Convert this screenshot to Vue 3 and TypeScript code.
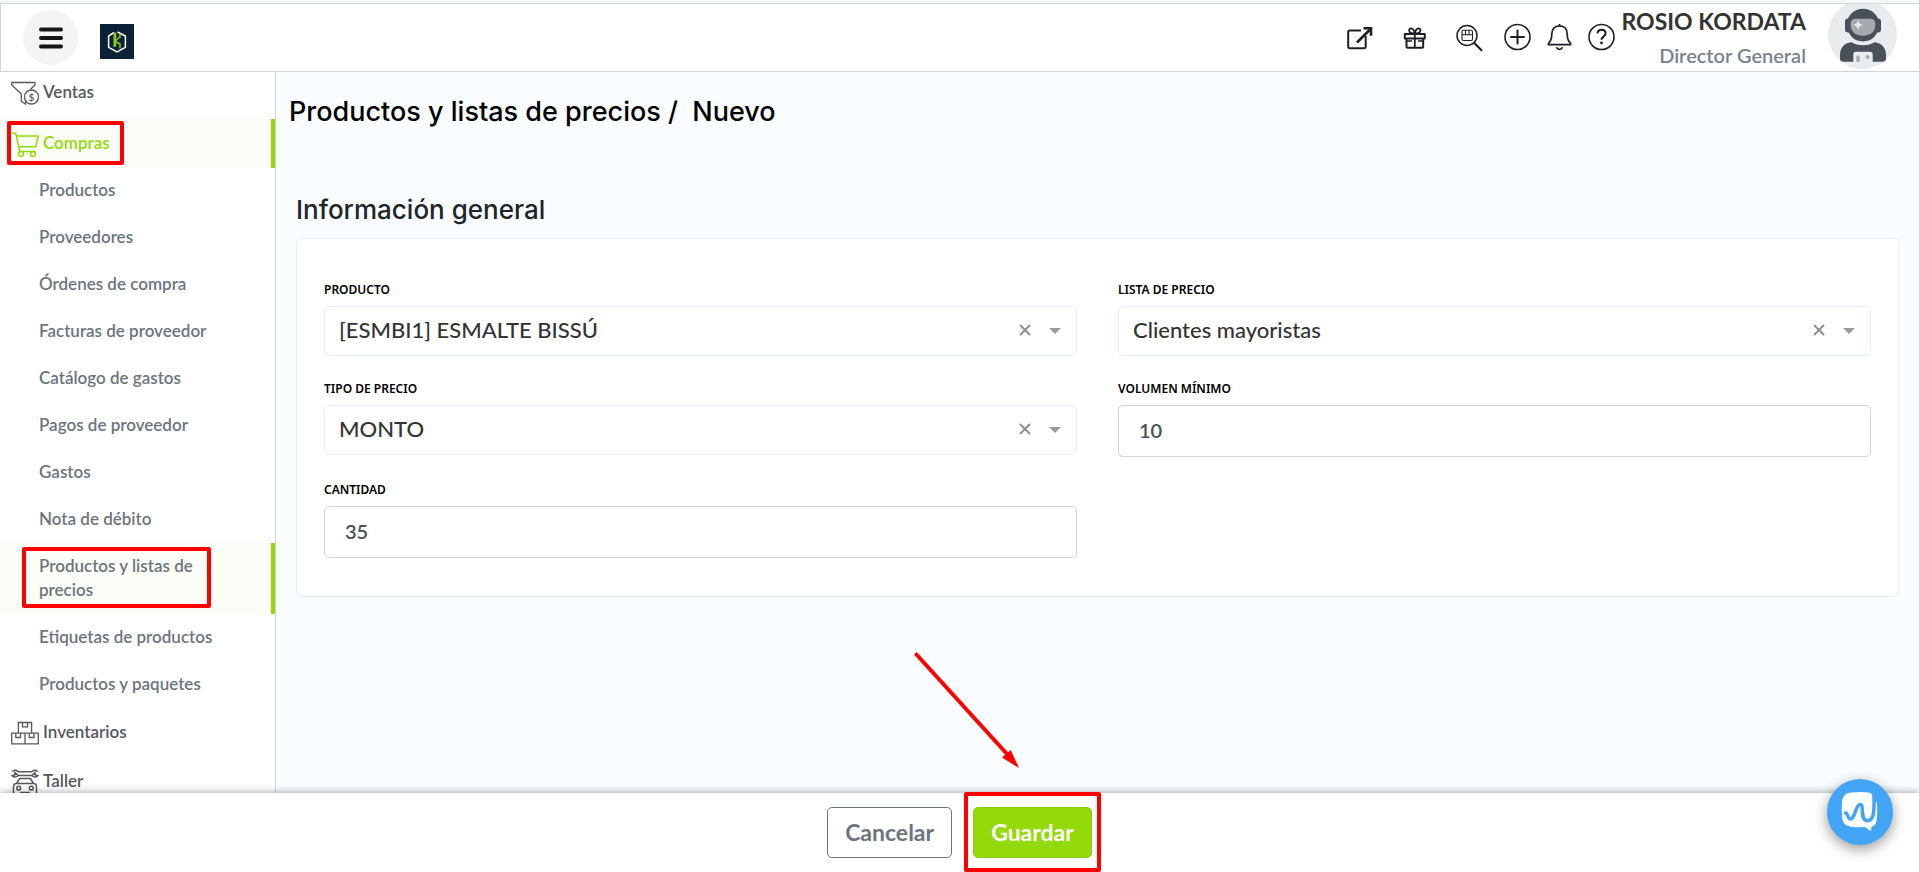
<script setup lang="ts">
import { ref } from 'vue'

const purchaseLinks: string[] = [
  'Productos',
  'Proveedores',
  'Órdenes de compra',
  'Facturas de proveedor',
  'Catálogo de gastos',
  'Pagos de proveedor',
  'Gastos',
  'Nota de débito',
  'Productos y listas de precios',
  'Etiquetas de productos',
  'Productos y paquetes',
]
const activeLink = 'Productos y listas de precios'

const product = ref('[ESMBI1] ESMALTE BISSÚ')
const priceList = ref('Clientes mayoristas')
const priceType = ref('MONTO')
const minVolume = ref('10')
const quantity = ref('35')
</script>

<template>
  <div class="shell">
    <header class="topbar">
      <button class="menu-btn" type="button" aria-label="Menú">
        <svg width="24" height="22" viewBox="0 0 24 22">
          <path d="M2 2.500h20M2 11h20M2 19.500h20" stroke="#161616" stroke-width="4" stroke-linecap="round" />
        </svg>
      </button>
      <a class="logo" href="#" aria-label="Kordata">
        <svg width="34" height="35" viewBox="0 0 34 35" fill="none">
          <path d="M14 8.500 8.600 12v11.400l8.400 4.400 8.400-4.400V12L17.500 8" stroke="#fff" stroke-width="1.500" />
          <path d="M14.200 9v14M15.500 8.500v14M15 17.500l4.500-4.500M20 9.500V14M15.500 17.500l4.500 2.500v4.500" stroke="#8cc71a" stroke-width="1.500" />
        </svg>
      </a>

      <div class="tools">
        <div class="tool-group wide">
          <button type="button" aria-label="Abrir en otra ventana">
            <svg viewBox="0 0 27 27" fill="none" stroke="#1c2026" stroke-width="2">
              <path d="M15 6.500H3.700A1.500 1.500 0 0 0 2.200 8v14.700a1.500 1.500 0 0 0 1.500 1.500h14.500a1.500 1.500 0 0 0 1.500-1.500V12" />
              <path d="M11 18.500 23.500 6M17.500 4.200H25v7.500" stroke-width="2.600" />
            </svg>
          </button>
          <button type="button" aria-label="Novedades">
            <svg viewBox="0 0 27 27" fill="none" stroke="#1c2026" stroke-width="2" stroke-linejoin="round">
              <path d="M3.800 10h20v4.500h-20zM5.500 14.500h16.700v8.200a1 1 0 0 1-1 1H6.500a1 1 0 0 1-1-1z" />
              <path d="M13.800 9.500v14M13.800 9.500C12.500 3 8 3.500 8.200 6.500c0 2 2 3 5.600 3zM13.800 9.500c1.300-6.500 5.800-6 5.600-3 0 2-2 3-5.600 3z" stroke-width="1.800" />
              <path d="M6 17h5M17 17h5" stroke-width="1.500" />
            </svg>
          </button>
          <button type="button" aria-label="Buscar producto">
            <svg viewBox="0 0 27 27" fill="none" stroke="#1c2026" stroke-width="1.500">
              <circle cx="11" cy="11.500" r="10" />
              <path d="m18 18.700 8 8" stroke-width="2.200" />
              <rect x="6" y="6.300" width="10.500" height="10.200" rx="1.500" stroke-width="1.100" />
              <path d="M6 10.700h10.500M9.500 6.500v4M13 6.500v4" stroke-width="1.100" />
            </svg>
          </button>
        </div>
        <div class="tool-group">
          <button type="button" aria-label="Agregar">
            <svg viewBox="0 0 27 27" fill="none" stroke="#1c2026" stroke-width="1.600">
              <circle cx="13.500" cy="13" r="12.500" />
              <path d="M13.500 6.500v13M7 13h13" stroke-width="2" stroke-linecap="round" />
            </svg>
          </button>
          <button type="button" aria-label="Notificaciones">
            <svg viewBox="0 0 27 27" fill="none" stroke="#1c2026" stroke-width="1.700" stroke-linejoin="round">
              <path d="M13.500 1.800c-5 0-7.700 3.600-7.700 8.200 0 5-1.300 7.500-3.400 9.300v1.400h22.200v-1.400c-2.100-1.800-3.400-4.300-3.400-9.300 0-4.600-2.700-8.200-7.700-8.200z" />
              <path d="M13.500 0v2" />
              <path d="M10.500 23.200a3.200 3.200 0 0 0 6 0" />
            </svg>
          </button>
          <button type="button" aria-label="Ayuda">
            <svg viewBox="0 0 27 27" fill="none" stroke="#1c2026" stroke-width="1.600">
              <circle cx="13.500" cy="13" r="12.500" />
              <path d="M9.500 9.500c.2-2.400 1.800-3.700 4.100-3.700 2.400 0 4 1.400 4 3.500 0 3-4 3.200-4 6.500" stroke-width="2" />
              <circle cx="13.500" cy="19" r="1.400" fill="#1c2026" stroke="none" />
            </svg>
          </button>
        </div>
      </div>

      <div class="user">
        <span class="user-name">ROSIO KORDATA</span>
        <span class="user-role">Director General</span>
      </div>
      <svg class="avatar" width="69" height="69" viewBox="0 0 69 69">
        <circle cx="34.500" cy="34.500" r="34.500" fill="#e8ecef" />
        <rect x="17" y="18.500" width="36" height="14" rx="3" fill="#4a505a" />
        <path d="M35 8.800c9 0 16 6.500 16 15.500 0 10-6.500 17.200-16 17.200s-16-7.200-16-17.200c0-9 7-15.500 16-15.500z" fill="#4a505a" />
        <path d="M28 18.800h14c4 0 5.300 2.200 5.300 5.500 0 7-3.800 11.400-12.300 11.400S22.700 31.300 22.700 24.300c0-3.300 1.300-5.500 5.300-5.500z" fill="#a6aaae" />
        <path d="M30 19.500c.5 3.800 1.700 5 5.500 5.500-3.800.5-5 1.700-5.500 5.500-.5-3.800-1.700-5-5.500-5.500 3.800-.5 5-1.700 5.500-5.500z" fill="#e8ecef" />
        <path d="M23.500 42.200c3 2 7 3 11.500 3s8.500-1 11.500-3C54 43 58 48 58 55v3.500c0 2.200-1.300 3.300-3.500 3.300h-39c-2.200 0-3.500-1.100-3.500-3.300V55c0-7 4-12 11.500-12.800z" fill="#4a505a" />
        <path d="M25.300 62v-7.500c0-2 1-2.800 2.800-2.800h13.800c1.800 0 2.800.8 2.800 2.800V62z" fill="#e8ecef" />
        <rect x="28.300" y="55.500" width="3.400" height="6.500" rx="1.500" fill="#a6aaae" />
        <circle cx="39.700" cy="57" r="1.900" fill="#a6aaae" />
      </svg>
    </header>

    <div class="body">
      <nav class="sidebar">
        <a class="section" href="#">
          <svg viewBox="0 0 28 26" fill="none" stroke="#55585c" stroke-width="1.300">
            <path d="M24 5V2.500H.8V5l9.500 9v7.500l4.200 2.500v-3M24 5l-4.500 4.300" />
            <circle cx="20.500" cy="17" r="7" />
            <text x="20.500" y="21" text-anchor="middle" class="coin">$</text>
          </svg>
          <span>Ventas</span>
        </a>
        <a class="section current" href="#">
          <svg viewBox="0 0 28 26" fill="none" stroke="#94d90a" stroke-width="1.500">
            <path d="M.5 2.200h4.200l4 18.300h15.800M5.500 5h21.700l-2.500 10.700H7.800" />
            <circle cx="10" cy="23" r="2.400" />
            <circle cx="22" cy="23" r="2.400" />
          </svg>
          <span>Compras</span>
          <i class="mark mark-section"></i>
        </a>
        <ul class="sublist">
          <li v-for="link in purchaseLinks" :key="link">
            <a href="#" :class="{ active: link === activeLink }">
              {{ link }}
              <i v-if="link === activeLink" class="mark mark-link"></i>
            </a>
          </li>
        </ul>
        <a class="section" href="#">
          <svg viewBox="0 0 28 26" fill="none" stroke="#55585c" stroke-width="1.300">
            <path d="M7.400 2.500h13.200v10.700H7.400zM.7 13.200H14v10.600H.7zM14 13.200h13.300v10.600H14z" />
            <path d="M11.500 2.500v4.300h5V2.500M4.800 13.200v4.300h4.700v-4.300M18.300 13.200v4.300H23v-4.300" />
          </svg>
          <span>Inventarios</span>
        </a>
        <a class="section" href="#">
          <svg viewBox="0 0 28 26" fill="none" stroke="#55585c" stroke-width="1.500">
            <path d="M7 2.800h14M7 6.500h14" />
            <path d="M1.200 2.600C3 .6 6 1 7 2.800M7 6.500C6 8.300 3 8.700 1.200 6.700L4 5.800V3.500zM26.800 2.600C25 .6 22 1 21 2.800M21 6.500c1 1.800 4 2.200 5.800.2L24 5.800V3.500z" />
            <path d="M5.500 14.500 8 10.500c.4-.7.8-1 1.500-1h9c.7 0 1.200.3 1.500 1l2.500 4M2.500 26v-8c0-2 1-3.500 3-3.500h17c2 0 3 1.500 3 3.500v8M9.500 23.500h9M9.500 26v-2.500M18.500 26v-2.500" />
            <circle cx="7.700" cy="19.200" r="1.900" />
            <circle cx="20.300" cy="19.200" r="1.900" />
          </svg>
          <span>Taller</span>
        </a>
      </nav>

      <main class="content">
        <h1>Productos y listas de precios / &nbsp;Nuevo</h1>
        <section class="general">
          <h2>Información general</h2>
          <form id="price-form" class="card" @submit.prevent>
            <div class="field">
              <label for="product">PRODUCTO</label>
              <div class="picker">
                <select id="product" v-model="product">
                  <option>[ESMBI1] ESMALTE BISSÚ</option>
                </select>
                <button type="button" class="clear" aria-label="Quitar producto" @click="product = ''">
                  <svg viewBox="0 0 12 12"><path d="m1 1 10 10M11 1 1 11" stroke="#8f8f8f" stroke-width="2" /></svg>
                </button>
                <i class="caret"></i>
              </div>
            </div>
            <div class="field">
              <label for="price-list">LISTA DE PRECIO</label>
              <div class="picker">
                <select id="price-list" v-model="priceList">
                  <option>Clientes mayoristas</option>
                </select>
                <button type="button" class="clear" aria-label="Quitar lista" @click="priceList = ''">
                  <svg viewBox="0 0 12 12"><path d="m1 1 10 10M11 1 1 11" stroke="#8f8f8f" stroke-width="2" /></svg>
                </button>
                <i class="caret"></i>
              </div>
            </div>
            <div class="field">
              <label for="price-type">TIPO DE PRECIO</label>
              <div class="picker">
                <select id="price-type" v-model="priceType">
                  <option>MONTO</option>
                </select>
                <button type="button" class="clear" aria-label="Quitar tipo" @click="priceType = ''">
                  <svg viewBox="0 0 12 12"><path d="m1 1 10 10M11 1 1 11" stroke="#8f8f8f" stroke-width="2" /></svg>
                </button>
                <i class="caret"></i>
              </div>
            </div>
            <div class="field">
              <label for="min-volume">VOLUMEN MÍNIMO</label>
              <input id="min-volume" v-model="minVolume" type="text" inputmode="numeric" />
            </div>
            <div class="field">
              <label for="quantity">CANTIDAD</label>
              <input id="quantity" v-model="quantity" type="text" inputmode="numeric" />
            </div>
          </form>
        </section>
      </main>
    </div>

    <footer class="actions">
      <button type="button" class="btn cancel">Cancelar</button>
      <div class="save-wrap">
        <button type="submit" form="price-form" class="btn save">Guardar</button>
        <i class="mark mark-save"></i>
        <svg class="arrow" width="116" height="126" viewBox="0 0 116 126">
          <path d="M7.500 5.500 98 105" stroke="#f00" stroke-width="4" stroke-linecap="round" />
          <path d="m110 119-17-10.500 8.700-7.500z" fill="#f00" />
        </svg>
      </div>
    </footer>

    <button class="chat" type="button" aria-label="Abrir chat">
      <svg width="66" height="66" viewBox="0 0 66 66" fill="none">
        <path d="M24 13.500c7-.8 13-.8 18 0 3 .6 4 3 4.300 6.500L50 24c.3 7 .3 13-.5 18-.4 3-2 5-5 5.700l-.7 4.600-6-4.300c-5 .5-9 .4-14-.3-5-.8-8-3.700-8.600-8.700-.6-6-.6-11 0-17 .5-5 3.800-8 8.800-8.500z" fill="#fff" />
        <path d="M18.500 34c2.200-.5 2.200 6.300 5 6 5-.5 4.500-13.500 9.500-14.500 5-.5-1 16 7.500 16.200 7.500-.2 6.500-13 6.500-24.700" stroke="#43a3f5" stroke-width="3.500" stroke-linecap="round" />
      </svg>
    </button>
  </div>
</template>

<style>
body {
  margin: 0;
}
</style>

<style scoped>
* {
  box-sizing: border-box;
}
.shell {
  display: flex;
  flex-direction: column;
  height: 100vh;
  overflow: hidden;
  padding-top: 3px;
  background: #f2f9f8;
  font-family: Lato, "Liberation Sans", sans-serif;
}
button {
  padding: 0;
  border: 0;
  background: none;
  font-family: inherit;
  cursor: pointer;
}
a {
  color: inherit;
  text-decoration: none;
}
svg {
  display: block;
  flex: none;
}
.topbar {
  display: flex;
  align-items: center;
  flex: none;
  height: 69px;
  padding: 0 22px;
  overflow: hidden;
  border: 1px solid #d0d5d5;
  border-right: 0;
  background: #fff;
}
.menu-btn {
  display: grid;
  place-items: center;
  width: 55px;
  height: 55px;
  border-radius: 50%;
  background: #f4f4f4;
}
.logo {
  margin: 8px 0 0 22px;
  background: #0b2138;
}
.tools {
  display: flex;
  gap: 21px;
  margin-left: auto;
}
.tool-group {
  display: flex;
  gap: 15px;
}
.tool-group.wide {
  gap: 28px;
}
.tool-group button,
.tool-group svg {
  width: 27px;
  height: 27px;
  overflow: visible;
}
.user {
  display: flex;
  flex-direction: column;
  align-items: flex-end;
  margin: 0 22px 0 6px;
  line-height: 34px;
}
.user-name {
  font-size: 23px;
  font-weight: 700;
  color: #333;
}
.user-role {
  font-size: 20px;
  font-weight: 600;
  color: #77838f;
}
.avatar {
  align-self: flex-start;
  margin-top: -4px;
}
.body {
  display: flex;
  flex: 1;
  min-height: 0;
}
.sidebar {
  flex: none;
  width: 276px;
  overflow: hidden;
  border-right: 1px solid #cfd4d8;
  background: #fff;
}
.section {
  position: relative;
  display: flex;
  align-items: center;
  gap: 4px;
  height: 49px;
  padding-left: 11px;
  font-size: 17px;
  font-weight: 600;
  color: #55585c;
}
.section:first-child {
  margin: -4px 0 2px;
}
.section span {
  padding-bottom: 2px;
}
.section svg {
  width: 28px;
  height: 26px;
}
.coin {
  font-size: 10px;
  fill: #55585c;
  stroke: none;
}
.current {
  border-right: 4px solid #94d90a;
  background: #fafdf6;
  color: #94d90a;
}
.sublist {
  margin: -1px 0 0;
  padding: 0;
  list-style: none;
}
.sublist a {
  position: relative;
  display: block;
  padding: 11px 40px 12px 39px;
  border-right: 4px solid transparent;
  font-size: 17px;
  font-weight: 600;
  line-height: 24px;
  color: #6c757d;
}
.sublist .active {
  border-color: #94d90a;
  background: #fafdf6;
}
.mark {
  position: absolute;
  border: 4px solid #f00;
  border-radius: 2px;
  pointer-events: none;
}
.mark-section {
  left: 7px;
  top: 2px;
  width: 117px;
  height: 44px;
}
.mark-link {
  left: 22px;
  top: 4px;
  width: 189px;
  height: 61px;
}
.mark-save {
  inset: -15px -9px -14px;
}
.content {
  flex: 1;
  min-width: 0;
  padding: 24px 20px 0 13px;
  background: #f9fdff;
}
h1,
h2 {
  margin: 0;
  font-family: Inter, "Liberation Sans", sans-serif;
  font-weight: 500;
  line-height: 32px;
}
h1 {
  font-size: 27px;
  color: #000;
}
.general {
  margin: 66px 0 0 7px;
}
h2 {
  font-size: 26px;
  color: #212529;
}
.card {
  display: grid;
  grid-template-columns: 1fr 1fr;
  align-items: start;
  gap: 24px 41px;
  margin-top: 12px;
  padding: 42px 27px 38px;
  border: 1px solid #e3effa;
  border-radius: 5px;
  background: #fff;
}
.field {
  display: flex;
  flex-direction: column;
  gap: 7px;
}
label {
  font-family: "Noto Sans", "Open Sans", sans-serif;
  font-size: 12px;
  font-weight: 600;
  line-height: 18px;
  color: #000;
}
.picker {
  position: relative;
}
select {
  display: block;
  appearance: none;
  width: 100%;
  height: 50px;
  padding: 0 80px 4px 14px;
  border: 1px solid #e3effc;
  border-radius: 5px;
  background: #fff;
  font-family: inherit;
  font-size: 22px;
  font-weight: 500;
  color: #333;
}
.clear {
  position: absolute;
  top: 18px;
  right: 46px;
  width: 12px;
  height: 12px;
}
.caret {
  position: absolute;
  top: 22px;
  right: 16px;
  border: 6px solid transparent;
  border-top-color: #999;
  border-bottom: 0;
  pointer-events: none;
}
input {
  width: 100%;
  height: 52px;
  padding: 0 20px 2px;
  border: 1px solid #ced4da;
  border-radius: 5px;
  background: #fff;
  font-family: inherit;
  font-size: 20px;
  font-weight: 600;
  color: #495057;
}
.actions {
  position: relative;
  display: flex;
  flex: none;
  justify-content: center;
  gap: 21px;
  padding: 14px;
  background: #fff;
  box-shadow: 0 0 8px rgba(0, 0, 0, 0.4);
}
.btn {
  height: 51px;
  padding: 0 17px 2px;
  border: 1px solid #6c757d;
  border-radius: 5px;
  font-size: 23px;
  font-weight: 700;
}
.cancel {
  color: #6c757d;
}
.save-wrap {
  position: relative;
}
.save {
  border-color: #8ccc0c;
  background: #94d90a;
  color: #fff;
}
.arrow {
  position: absolute;
  left: -64px;
  bottom: 83px;
  pointer-events: none;
}
.chat {
  position: fixed;
  right: 26px;
  bottom: 27px;
  border-radius: 50%;
  background: #43a3f5;
  box-shadow: 0 4px 14px rgba(0, 0, 0, 0.4);
}
</style>
